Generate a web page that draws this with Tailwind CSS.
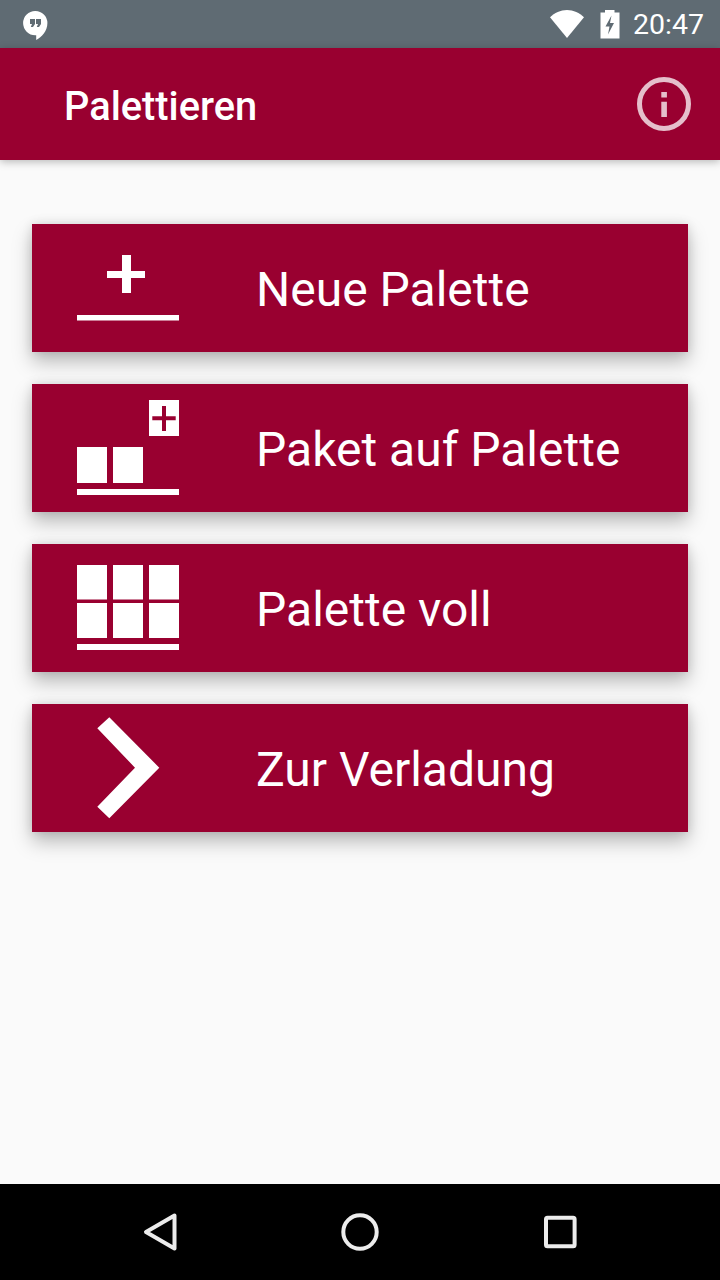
<!DOCTYPE html>
<html lang="de">
<head>
<meta charset="utf-8">
<script src="https://cdn.jsdelivr.net/npm/@tailwindcss/browser@4"></script>
</head>
<body class="m-0">
<div class="w-[720px] h-[1280px] flex flex-col bg-[#fafafa] font-['Roboto',sans-serif] overflow-hidden">
  <div class="h-12 shrink-0 bg-[#5f6b73] flex items-center pl-[23px] pr-4 text-white">
    <svg width="25" height="30" viewBox="0 0 25 30" class="mt-1"><path fill="#fff" d="M12.2 0a12.1 12.1 0 0 0 0 24.2h1v4.8c5.500-2.700 11.200-8.500 11.200-16.900A12.100 12.100 0 0 0 12.200 0z"/><path fill="#5f6b73" d="M7 8h5v5l-2 3H7.800l1.200-3H7zM13 8h5v5l-2 3h-2.200l1.200-3h-2z"/></svg>
    <div class="flex-1"></div>
    <svg width="34" height="28" viewBox="0 0 34 28" class="mr-4"><path fill="#fff" d="M0 7.200C4.500 3 10.500 0 17 0s12.500 3 17 7.200L17 28z"/></svg>
    <svg width="20" height="29" viewBox="0 0 20 29" class="mr-[13px]"><path fill="#fff" d="M5 0h9.500v2.400H19.500V28.500H0.500V2.400H5z"/><path fill="#5f6b73" d="M11.500 5.500L5.500 16.500h4l-1.500 8 6-11.500h-4z"/></svg>
    <span class="text-[28.500px] leading-none mt-[2px]">20:47</span>
  </div>
  <header class="h-28 shrink-0 bg-[#990030] flex items-center pl-[64px] pr-[29px] shadow-[0_2px_8px_rgba(0,0,0,0.26)] relative z-10">
    <h1 class="flex-1 text-[39.800px] leading-none font-medium text-white mt-[5px] whitespace-nowrap">Palettieren</h1>
    <svg width="54" height="54" viewBox="0 0 54 54"><circle cx="27" cy="27" r="24.500" fill="none" stroke="#fff" stroke-opacity="0.75" stroke-width="5"/><path fill="#fff" fill-opacity="0.75" d="M24.300 15h5.600v5.500h-5.600zM24.300 24.700h5.600V40h-5.600z"/></svg>
  </header>
  <main class="flex-1 flex flex-col gap-8 px-8 pt-16">
    <button class="h-32 flex items-center bg-[#990030] text-white shadow-[0_10px_18px_rgba(0,0,0,0.25),0_0_10px_rgba(0,0,0,0.12)]">
      <svg width="224" height="128" viewBox="0 0 224 128" class="shrink-0"><path fill="#fff" d="M90 31h9v16h14v7H99v15h-9V54H75v-7h15zM45 91h102v5.500H45z"/></svg>
      <span class="text-[48px] leading-none whitespace-nowrap mt-1">Neue Palette</span>
    </button>
    <button class="h-32 flex items-center bg-[#990030] text-white shadow-[0_10px_18px_rgba(0,0,0,0.25),0_0_10px_rgba(0,0,0,0.12)]">
      <svg width="224" height="128" viewBox="0 0 224 128" class="shrink-0"><path fill="#fff" fill-rule="evenodd" d="M117 16h30v36h-30zM130 22v10.300h-9.700v4H130V47h4V36.300h9.700v-4H134V22zM45 63h30v36H45zM81 63h30v36H81zM45 105h102v6H45z"/></svg>
      <span class="text-[48px] leading-none whitespace-nowrap mt-1">Paket auf Palette</span>
    </button>
    <button class="h-32 flex items-center bg-[#990030] text-white shadow-[0_10px_18px_rgba(0,0,0,0.25),0_0_10px_rgba(0,0,0,0.12)]">
      <svg width="224" height="128" viewBox="0 0 224 128" class="shrink-0"><path fill="#fff" d="M45 21h30v34.500H45zM81 21h30v34.500H81zM117 21h30v34.500h-30zM45 59h30v35H45zM81 59h30v35H81zM117 59h30v35h-30zM45 100h102v6H45z"/></svg>
      <span class="text-[48px] leading-none whitespace-nowrap mt-1">Palette voll</span>
    </button>
    <button class="h-32 flex items-center bg-[#990030] text-white shadow-[0_10px_18px_rgba(0,0,0,0.25),0_0_10px_rgba(0,0,0,0.12)]">
      <svg width="224" height="128" viewBox="0 0 224 128" class="shrink-0"><path fill="#fff" d="M77.300 13.300L65.300 24.300 103 63.700 65.300 102.700 77.300 114.300 127.300 63.700z"/></svg>
      <span class="text-[48px] leading-none whitespace-nowrap mt-1">Zur Verladung</span>
    </button>
  </main>
  <nav class="h-24 shrink-0 bg-black">
    <svg width="720" height="96" viewBox="0 0 720 96" fill="none" stroke="#ececec" stroke-width="4" stroke-linejoin="round">
      <path d="M174.500 31.500L146 48l28.500 16.500z"/>
      <circle cx="360" cy="48" r="16.700"/>
      <rect x="546" y="33.700" width="28.600" height="28.600" rx="1.500"/>
    </svg>
  </nav>
</div>
</body>
</html>
